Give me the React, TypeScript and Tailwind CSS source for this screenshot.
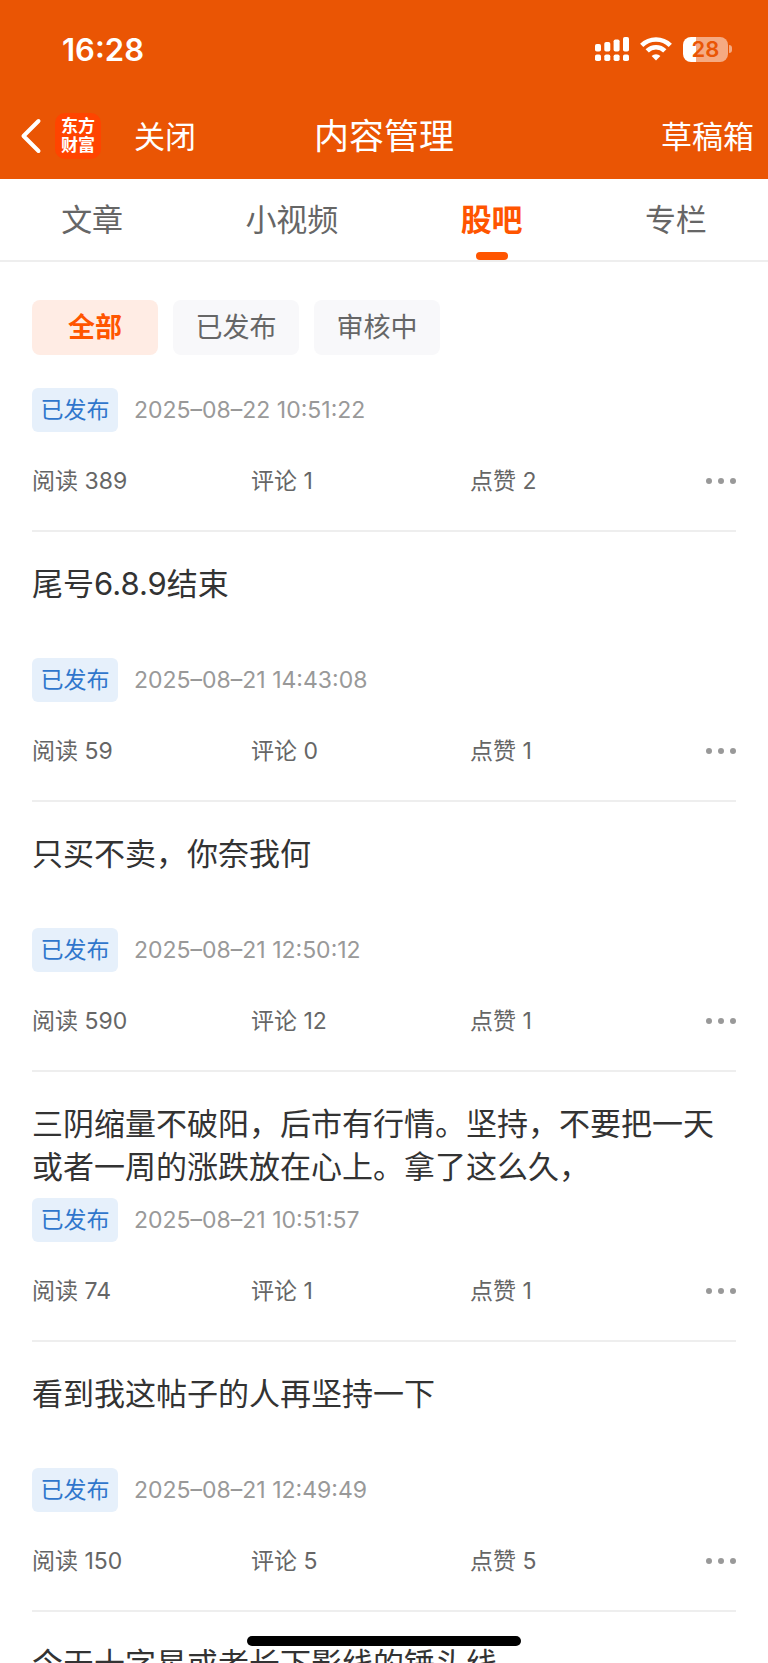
import React from 'react';

type Post = {
  title?: string;
  time?: string;
  reads?: number;
  comments?: number;
  likes?: number;
};

const posts: Post[] = [
  { time: '2025–08–22 10:51:22', reads: 389, comments: 1, likes: 2 },
  { title: '尾号6.8.9结束', time: '2025–08–21 14:43:08', reads: 59, comments: 0, likes: 1 },
  { title: '只买不卖，你奈我何', time: '2025–08–21 12:50:12', reads: 590, comments: 12, likes: 1 },
  {
    title: '三阴缩量不破阳，后市有行情。坚持，不要把一天或者一周的涨跌放在心上。拿了这么久，',
    time: '2025–08–21 10:51:57',
    reads: 74,
    comments: 1,
    likes: 1,
  },
  { title: '看到我这帖子的人再坚持一下', time: '2025–08–21 12:49:49', reads: 150, comments: 5, likes: 5 },
  { title: '今天十字星或者长下影线的锤头线' },
];

const tabs = ['文章', '小视频', '股吧', '专栏'];
const filters = ['全部', '已发布', '审核中'];

function SignalIcon() {
  return (
    <svg width="34" height="24" viewBox="0 0 34 24" fill="#fff" aria-hidden="true">
      <rect x="0" y="7" width="6" height="7.5" rx="1.8" />
      <rect x="9.3" y="5" width="6" height="9.5" rx="1.8" />
      <rect x="18.6" y="2.5" width="6" height="12" rx="1.8" />
      <rect x="28" y="0" width="6" height="14.5" rx="1.8" />
      <rect x="0" y="17.5" width="6" height="6.5" rx="1.8" />
      <rect x="9.3" y="17.5" width="6" height="6.5" rx="1.8" />
      <rect x="18.6" y="17.5" width="6" height="6.5" rx="1.8" />
      <rect x="28" y="17.5" width="6" height="6.5" rx="1.8" />
    </svg>
  );
}

function WifiIcon() {
  return (
    <svg width="32" height="24" viewBox="0 0 32 24" aria-hidden="true">
      <g fill="none" stroke="#fff" strokeWidth="4.6">
        <path d="M1.7 8.3a20.4 20.4 0 0 1 28.6 0" />
        <path d="M7.2 13.9a12.5 12.5 0 0 1 17.6 0" />
      </g>
      <path d="M16 23.4l-4.4-4.4a6.2 6.2 0 0 1 8.8 0z" fill="#fff" />
    </svg>
  );
}

function Battery() {
  return (
    <div className="flex items-center gap-px" aria-label="电量 28%">
      <div className="flex h-[25px] w-[45px] items-center justify-center rounded-lg bg-linear-to-r from-white from-28% to-[#f5aa82] to-28% text-[22px] leading-none font-semibold text-[#ea5504]">
        28
      </div>
      <div className="h-2 w-[3px] rounded-r-full bg-[#f5aa82]" />
    </div>
  );
}

function PostItem({ post }: { post: Post }) {
  return (
    <li className="border-b-2 border-[#eeeeee]">
      {post.title && (
        <h2 className="mb-[10px] box-content min-h-[86px] pt-[30px] text-[31px] leading-[43px] text-[#333333]">
          {post.title}
        </h2>
      )}
      {post.time && (
        <>
          <div className="flex items-center gap-4">
            <span className="flex h-11 w-[86px] items-center justify-center rounded-md bg-[#e6f0fb] text-[23px] leading-none text-[#2f76cc]">
              已发布
            </span>
            <time className="text-[23px] leading-none text-[#999999]">{post.time}</time>
          </div>
          <div className="my-[29px] grid h-10 grid-cols-[1fr_1fr_1fr_47px] items-center text-[23px] leading-none text-[#666666]">
            <span>阅读 {post.reads}</span>
            <span>评论 {post.comments}</span>
            <span>点赞 {post.likes}</span>
            <button type="button" aria-label="更多" className="flex h-full items-center justify-end gap-[6px]">
              <i className="size-[6px] rounded-full bg-[#999999]" />
              <i className="size-[6px] rounded-full bg-[#999999]" />
              <i className="size-[6px] rounded-full bg-[#999999]" />
            </button>
          </div>
        </>
      )}
    </li>
  );
}

export default function App() {
  return (
    <div className="relative flex h-screen flex-col overflow-hidden bg-white font-['Inter','Noto_Sans_CJK_SC',sans-serif]">
      <header className="shrink-0 bg-[#ea5504] pb-[5px] text-white">
        <div className="flex h-[98px] items-center justify-between pr-9 pl-[62px]">
          <span className="text-[31px] leading-none font-semibold">16:28</span>
          <div className="flex items-center gap-[11px]">
            <SignalIcon />
            <WifiIcon />
            <Battery />
          </div>
        </div>
        <div className="grid h-[76px] grid-cols-[1fr_auto_1fr] items-center px-[14px]">
          <div className="flex items-center">
            <button type="button" aria-label="返回" className="pl-[6px]">
              <svg width="22" height="36" viewBox="0 0 22 36" fill="none" stroke="#fff" strokeWidth="4" strokeLinecap="round" strokeLinejoin="round">
                <path d="M18.5 3L3.5 18l15 15" />
              </svg>
            </button>
            <div className="ml-[13px] flex size-[46px] flex-col items-center justify-center rounded-[10px] bg-[#ff4400] text-[17px] leading-[19px] font-bold">
              <span>东方</span>
              <span>财富</span>
            </div>
            <button type="button" className="ml-[33px] text-[31px] leading-none">
              关闭
            </button>
          </div>
          <h1 className="text-[35px] leading-none">内容管理</h1>
          <button type="button" className="justify-self-end text-[31px] leading-none">
            草稿箱
          </button>
        </div>
      </header>

      <nav className="flex h-[83px] shrink-0 justify-around border-b-2 border-[#eeeeee]">
        {tabs.map((tab) => {
          const active = tab === '股吧';
          return (
            <button
              key={tab}
              type="button"
              className={
                active
                  ? 'flex flex-col items-center justify-between text-[31px] font-bold text-[#ff5500]'
                  : 'flex flex-col items-center justify-between text-[31px] text-[#666666]'
              }
            >
              <span className="pt-[18px] leading-[46px]">{tab}</span>
              {active && <span className="h-2 w-8 rounded-full bg-[#ff5500]" />}
            </button>
          );
        })}
      </nav>

      <main className="min-h-0 flex-1 overflow-hidden px-8 pt-[38px]">
        <div className="mb-[33px] flex gap-[15px]">
          {filters.map((filter, index) => (
            <button
              key={filter}
              type="button"
              className={
                index === 0
                  ? 'h-[55px] w-[126px] rounded-lg bg-[#ffece4] text-[27px] leading-none font-bold text-[#ff5500]'
                  : 'h-[55px] w-[126px] rounded-lg bg-[#f8f8fa] text-[27px] leading-none text-[#666666]'
              }
            >
              {filter}
            </button>
          ))}
        </div>
        <ul>
          {posts.map((post, index) => (
            <PostItem key={index} post={post} />
          ))}
        </ul>
      </main>

      <div className="absolute bottom-[17px] left-1/2 h-[10px] w-[274px] -translate-x-1/2 rounded-full bg-black" />
    </div>
  );
}
